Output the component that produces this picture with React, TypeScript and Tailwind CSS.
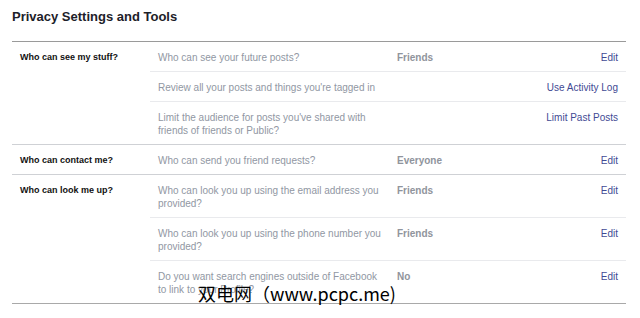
const sections = [
  {
    label: 'Who can see my stuff?',
    rows: [
      { q: 'Who can see your future posts?', v: 'Friends', a: 'Edit' },
      { q: "Review all your posts and things you're tagged in", v: '', a: 'Use Activity Log' },
      { q: "Limit the audience for posts you've shared with friends of friends or Public?", v: '', a: 'Limit Past Posts' },
    ],
  },
  {
    label: 'Who can contact me?',
    rows: [{ q: 'Who can send you friend requests?', v: 'Everyone', a: 'Edit' }],
  },
  {
    label: 'Who can look me up?',
    rows: [
      { q: 'Who can look you up using the email address you provided?', v: 'Friends', a: 'Edit' },
      { q: 'Who can look you up using the phone number you provided?', v: 'Friends', a: 'Edit' },
      { q: 'Do you want search engines outside of Facebook to link to your Profile?', v: 'No', a: 'Edit' },
    ],
  },
];

export default function App() {
  return (
    <div
      className="relative w-[640px] h-[318px] bg-white pl-[12px] pr-[14px] pt-[9px]"
      style={{ fontFamily: '"Liberation Sans", Arial, sans-serif' }}
    >
      <h1 className="text-[13px] leading-[16px] font-bold text-[#1d2129] pb-[16px] border-b border-[#9a9a9a]">
        Privacy Settings and Tools
      </h1>

      <div className="border-b border-[#a9a9a9]">
        {sections.map((s, si) => (
          <div key={s.label} className={`flex ${si > 0 ? 'border-t border-[#cfd1d5]' : ''}`}>
            <div className="w-[138px] shrink-0 pl-[8px] pt-[9px] text-[9px] leading-[13px] font-bold text-[#111]">
              {s.label}
            </div>
            <div className="flex-1">
              {s.rows.map((r, ri) => (
                <div
                  key={r.q}
                  className={`flex pl-[8px] pr-[8px] pt-[9px] pb-[7px] text-[10px] leading-[13px] ${
                    ri < s.rows.length - 1 ? 'border-b border-[#e9eaed]' : ''
                  }`}
                >
                  <div className="w-[226px] shrink-0 text-[#9197a3]">{r.q}</div>
                  <div className="ml-[13px] flex-1 font-bold text-[#90949c]">{r.v}</div>
                  <div className="text-[#3f4a94] whitespace-nowrap">{r.a}</div>
                </div>
              ))}
            </div>
          </div>
        ))}
      </div>

      <div
        className="absolute left-[198px] top-[283px] text-[18px] leading-[20px] text-black whitespace-nowrap"
        style={{ fontFamily: '"Noto Sans CJK SC", "DejaVu Sans Mono", monospace' }}
      >
        双电网（www.pcpc.me)
      </div>
    </div>
  );
}
